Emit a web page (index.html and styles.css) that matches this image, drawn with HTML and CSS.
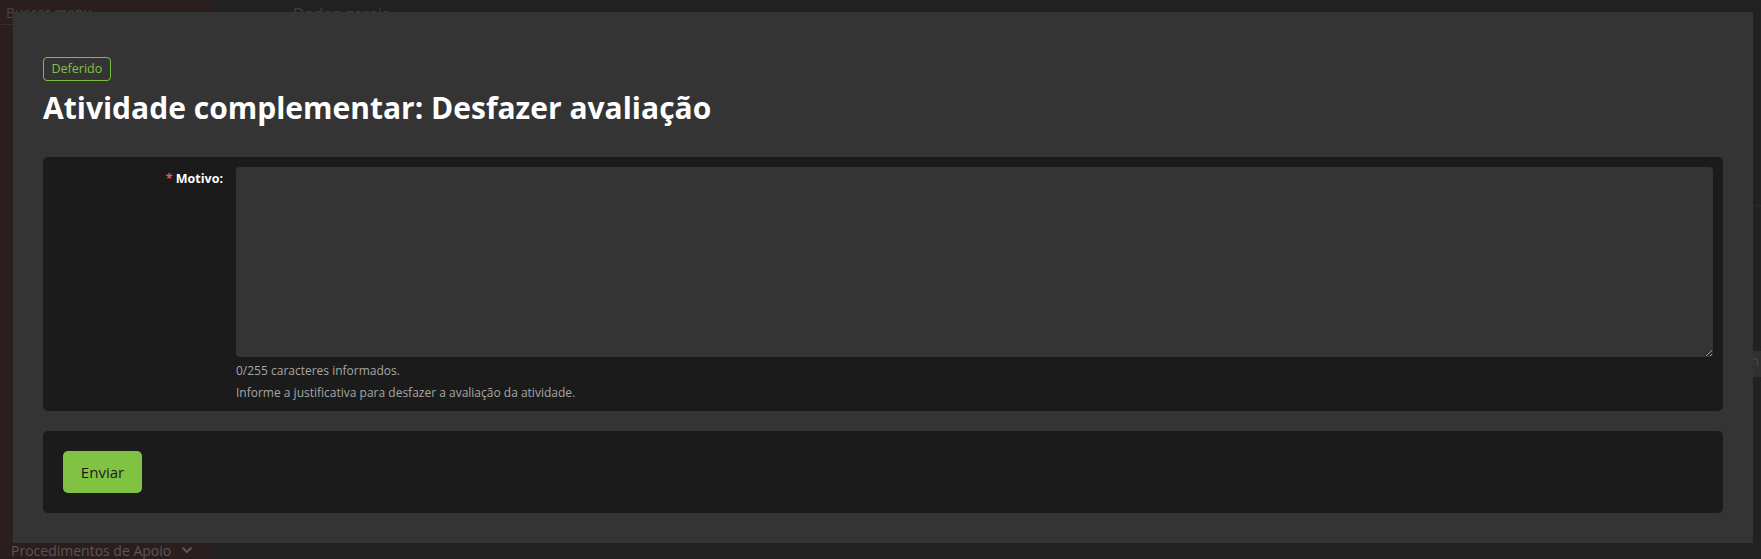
FILE: index.html
```html
<!DOCTYPE html>
<html lang="pt-BR">
<head>
<meta charset="utf-8">
<title>Atividade complementar: Desfazer avaliação</title>
<link rel="stylesheet" href="styles.css">
</head>
<body>
<div class="app">
  <aside class="sidebar">
    <div class="search">Buscar menu</div>
    <div class="side-spacer"></div>
    <div class="side-item">Procedimentos de Apoio
      <svg class="chev" width="12" height="8" viewBox="0 0 12 8"><path d="M1.5 1.5 L6 6 L10.5 1.5" fill="none" stroke="currentColor" stroke-width="2"/></svg>
    </div>
  </aside>
  <main class="main">
    <div class="page-head">Dados gerais</div>
    <div class="page-body">
      <div class="page-row"></div>
      <div class="page-chip">n</div>
    </div>
  </main>
</div>

<div class="overlay">
  <section class="modal">
    <span class="badge">Deferido</span>
    <h1 class="title">Atividade complementar: Desfazer avaliação</h1>

    <form class="form-panel">
      <label class="field-label" for="motivo"><span class="req">*</span> Motivo:</label>
      <div class="field">
        <textarea id="motivo" class="textarea"></textarea>
        <div class="hint">0/255 caracteres informados.</div>
        <div class="hint">Informe a justificativa para desfazer a avaliação da atividade.</div>
      </div>
    </form>

    <div class="actions-panel">
      <button class="btn" type="button">Enviar</button>
    </div>
  </section>
</div>
</body>
</html>
```
FILE: styles.css
```css
* { box-sizing: border-box; }

html, body {
  margin: 0;
  height: 100%;
}

body {
  background: #1f1f1f;
  font-family: "Open Sans", "Noto Sans", sans-serif;
  overflow: hidden;
}

.app {
  display: flex;
  height: 100vh;
}

.sidebar {
  width: 213px;
  background: #2a1e1e;
  display: flex;
  flex-direction: column;
  color: #4d4141;
}

.search {
  height: 25px;
  padding: 3px 6px;
  font-size: 14px;
  border-bottom: 1px solid #3a2c2c;
}

.side-spacer { flex: 1; }

.side-item {
  display: flex;
  align-items: center;
  gap: 10px;
  padding: 0 11px 0 11px;
  height: 18px;
  font-size: 14px;
  color: #5f5656;
  white-space: nowrap;
}

.chev { color: #5f5656; }

.main {
  flex: 1;
  background: #212121;
  display: flex;
  flex-direction: column;
}

.page-head {
  padding: 3px 0 0 80px;
  height: 40px;
  font-size: 16px;
  color: #2e4a3c;
}

.page-body {
  flex: 1;
  display: flex;
  flex-direction: column;
  align-items: flex-end;
}

.page-row {
  margin-top: 165px;
  width: 100%;
  border-bottom: 1px solid #2a2a2a;
}

.page-chip {
  margin-top: 145px;
  width: 40px;
  height: 26px;
  background: #303030;
  color: #4a4a4a;
  font-size: 14px;
  text-align: right;
  padding-right: 2px;
}

/* overlay & modal */
.overlay {
  position: fixed;
  inset: 0;
  display: flex;
  padding: 12px 8px 16px 13px;
}

.modal {
  flex: 1;
  background: #343434;
  padding: 45px 30px 30px;
  display: flex;
  flex-direction: column;
  align-items: flex-start;
}

.badge {
  display: inline-block;
  border: 1px solid #7cbf3f;
  border-radius: 4px;
  color: #80c342;
  font-size: 12.5px;
  line-height: 22px;
  padding: 0 7.5px;
}

.title {
  margin: 6px 0 0;
  font-size: 30px;
  line-height: 41px;
  font-weight: 700;
  color: #ffffff;
}

.form-panel {
  margin-top: 29px;
  align-self: stretch;
  background: #1b1b1b;
  border-radius: 5px;
  padding: 10px 10px 10px 0;
  display: flex;
}

.field-label {
  width: 180px;
  margin-right: 13px;
  padding-top: 4px;
  text-align: right;
  font-size: 12.5px;
  line-height: 16px;
  font-weight: 700;
  color: #ffffff;
}

.req { color: #e45a5a; }

.field { flex: 1; }

.textarea {
  display: block;
  width: 100%;
  height: 190px;
  background: #343434;
  border: none;
  border-radius: 4px;
  color: #fff;
  resize: vertical;
  outline: none;
}

.hint {
  margin-top: 6px;
  font-size: 12px;
  line-height: 16px;
  color: #a6a6a6;
}

.actions-panel {
  margin-top: 20px;
  align-self: stretch;
  background: #1b1b1b;
  border-radius: 5px;
  padding: 20px;
}

.btn {
  width: 79px;
  height: 42px;
  border: none;
  border-radius: 5px;
  background: #80c342;
  color: #1b1b1b;
  font-family: "Open Sans", "Noto Sans", sans-serif;
  font-size: 15px;
  cursor: pointer;
}
```
